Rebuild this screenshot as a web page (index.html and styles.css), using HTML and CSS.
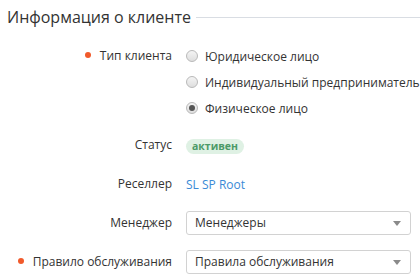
FILE: index.html
```html
<!DOCTYPE html>
<html lang="ru">
<head>
    <meta charset="UTF-8">
    <title>Информация о клиенте</title>
    <link rel="stylesheet" href="styles.css">
</head>
<body>
    <div class="section">
        <div class="section-title">
            <h2>Информация о клиенте</h2>
            <span class="title-line"></span>
        </div>

        <div class="form">
            <div class="row row-radios">
                <div class="label required">Тип клиента</div>
                <div class="radios">
                    <label class="radio"><span class="radio-mark"></span>Юридическое лицо</label>
                    <label class="radio"><span class="radio-mark"></span>Индивидуальный предприниматель</label>
                    <label class="radio"><span class="radio-mark checked"></span>Физическое лицо</label>
                </div>
            </div>

            <div class="row row-status">
                <div class="label">Статус</div>
                <div class="value"><span class="badge">активен</span></div>
            </div>

            <div class="row row-reseller">
                <div class="label">Реселлер</div>
                <div class="value"><a class="link" href="#">SL SP Root</a></div>
            </div>

            <div class="row row-manager">
                <div class="label">Менеджер</div>
                <div class="value">
                    <div class="select">Менеджеры<span class="caret"></span></div>
                </div>
            </div>

            <div class="row row-rule">
                <div class="label required">Правило обслуживания</div>
                <div class="value">
                    <div class="select">Правила обслуживания<span class="caret"></span></div>
                </div>
            </div>
        </div>
    </div>
</body>
</html>
```

FILE: styles.css
```css
body {
    margin: 0;
    font-family: "Open Sans", "Noto Sans", sans-serif;
    font-size: 12px;
    color: #333;
    background: #fff;
}

.section {
    padding: 5px 9px 0 7px;
}

.section-title {
    display: flex;
    align-items: center;
    gap: 5px;
}

.section-title h2 {
    margin: 0;
    font-size: 16px;
    font-weight: normal;
    line-height: 24px;
    color: #333;
}

.title-line {
    flex: 1;
    height: 1px;
    margin-top: 1px;
    margin-right: -9px;
    background: #d9dde3;
}

.form {
    margin-top: 14px;
    display: flex;
    flex-direction: column;
}

.row {
    display: grid;
    grid-template-columns: 165px 1fr;
    column-gap: 14px;
    align-items: center;
}

.row-radios {
    align-items: start;
}

.row-status {
    margin-top: 11px;
    height: 26px;
}

.row-reseller {
    margin-top: 13px;
    height: 26px;
}

.row-manager {
    margin-top: 13px;
}

.row-rule {
    margin-top: 13px;
}

.label {
    text-align: right;
    line-height: 26px;
    white-space: nowrap;
}

.required::before {
    content: "";
    display: inline-block;
    width: 6px;
    height: 6px;
    border-radius: 50%;
    background: #f15a2b;
    margin-right: 9px;
    vertical-align: 2px;
}

.radios {
    display: flex;
    flex-direction: column;
}

.radio {
    display: flex;
    align-items: center;
    height: 26px;
    white-space: nowrap;
}

.radio-mark {
    width: 10px;
    height: 10px;
    border: 1px solid #b9b9b9;
    border-radius: 50%;
    background: linear-gradient(#f4f4f4, #dedede);
    margin-right: 7px;
    position: relative;
}

.radio-mark.checked::after {
    content: "";
    position: absolute;
    left: 2px;
    top: 2px;
    width: 6px;
    height: 6px;
    border-radius: 50%;
    background: #555;
}

.badge {
    display: inline-block;
    background: #dff1e4;
    color: #4c9a68;
    font-size: 10.5px;
    font-weight: bold;
    line-height: 15px;
    padding: 0 6px;
    border-radius: 8px;
}

.link {
    color: #3a8ad6;
    text-decoration: none;
}

.select {
    position: relative;
    height: 22px;
    line-height: 22px;
    border: 1px solid #d2d2d2;
    border-radius: 3px;
    padding-left: 8px;
}

.caret {
    position: absolute;
    right: 9px;
    top: 9px;
    width: 0;
    height: 0;
    border-left: 4px solid transparent;
    border-right: 4px solid transparent;
    border-top: 5px solid #8a8a8a;
}
```
